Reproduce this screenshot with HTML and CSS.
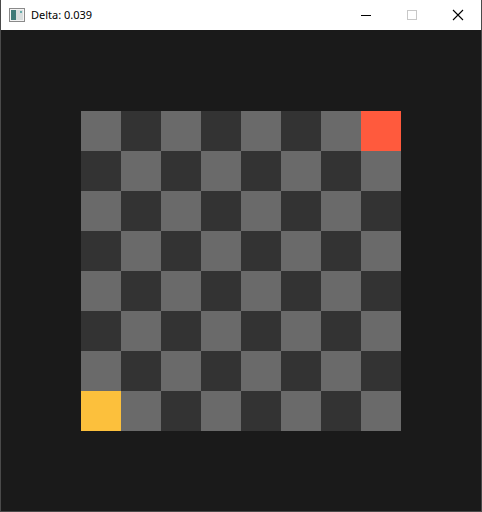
FILE: index.html
```html
<!DOCTYPE html>
<html>
<head>
<meta charset="utf-8">
<link rel="stylesheet" href="styles.css">
</head>
<body>
<div class="window">
  <div class="titlebar">
    <svg class="appicon" width="16" height="14" viewBox="0 0 16 14">
      <rect x="0.5" y="0.5" width="15" height="13" fill="#f4f4f4" stroke="#8a8a8a"/>
      <rect x="2" y="2" width="5" height="10" fill="#3f7a78"/>
      <rect x="7" y="2" width="7" height="10" fill="#d8dede"/>
      <rect x="11" y="3" width="2" height="2" fill="#6aa"/>
    </svg>
    <span class="title">Delta: 0.039</span>
    <div class="controls">
      <div class="ctl"><svg width="12" height="12" viewBox="0 0 12 12"><line x1="1" y1="6.5" x2="11" y2="6.5" stroke="#000" stroke-width="1"/></svg></div>
      <div class="ctl"><svg width="12" height="12" viewBox="0 0 12 12"><rect x="1.5" y="1.5" width="9" height="9" fill="none" stroke="#c8c8c8"/></svg></div>
      <div class="ctl"><svg width="12" height="12" viewBox="0 0 12 12"><path d="M1 1 L11 11 M11 1 L1 11" stroke="#000" stroke-width="1.1"/></svg></div>
    </div>
  </div>
  <div class="content">
    <div class="board">
      <div class="l"></div><div class="d"></div><div class="l"></div><div class="d"></div><div class="l"></div><div class="d"></div><div class="l"></div><div class="o"></div>
      <div class="d"></div><div class="l"></div><div class="d"></div><div class="l"></div><div class="d"></div><div class="l"></div><div class="d"></div><div class="l"></div>
      <div class="l"></div><div class="d"></div><div class="l"></div><div class="d"></div><div class="l"></div><div class="d"></div><div class="l"></div><div class="d"></div>
      <div class="d"></div><div class="l"></div><div class="d"></div><div class="l"></div><div class="d"></div><div class="l"></div><div class="d"></div><div class="l"></div>
      <div class="l"></div><div class="d"></div><div class="l"></div><div class="d"></div><div class="l"></div><div class="d"></div><div class="l"></div><div class="d"></div>
      <div class="d"></div><div class="l"></div><div class="d"></div><div class="l"></div><div class="d"></div><div class="l"></div><div class="d"></div><div class="l"></div>
      <div class="l"></div><div class="d"></div><div class="l"></div><div class="d"></div><div class="l"></div><div class="d"></div><div class="l"></div><div class="d"></div>
      <div class="y"></div><div class="l"></div><div class="d"></div><div class="l"></div><div class="d"></div><div class="l"></div><div class="d"></div><div class="l"></div>
    </div>
  </div>
</div>
</body>
</html>
```
FILE: styles.css
```css
html, body {
  margin: 0;
  padding: 0;
  background: #1a1a1a;
}
.window {
  width: 480px;
  height: 511px;
  border: 1px solid #4a4a4a;
  border-top: none;
  display: flex;
  flex-direction: column;
}
.titlebar {
  height: 30px;
  background: #ffffff;
  display: flex;
  align-items: center;
  font-family: "Segoe UI", "Noto Sans", "Liberation Sans", sans-serif;
  font-size: 11px;
  color: #000;
}
.appicon {
  margin-left: 8px;
  margin-right: 6px;
}
.title {
  flex: 1;
  margin-top: -1px;
}
.controls {
  display: flex;
  height: 30px;
}
.ctl {
  width: 46px;
  height: 30px;
  display: flex;
  align-items: center;
  justify-content: center;
}
.content {
  flex: 1;
  background: #1a1a1a;
  padding: 81px 80px 0 80px;
}
.board {
  display: grid;
  grid-template-columns: repeat(8, 40px);
  grid-template-rows: repeat(8, 40px);
  width: 320px;
}
.l { background: #6a6a6a; }
.d { background: #333333; }
.o { background: #ff5a3d; }
.y { background: #fcc03c; }
```
